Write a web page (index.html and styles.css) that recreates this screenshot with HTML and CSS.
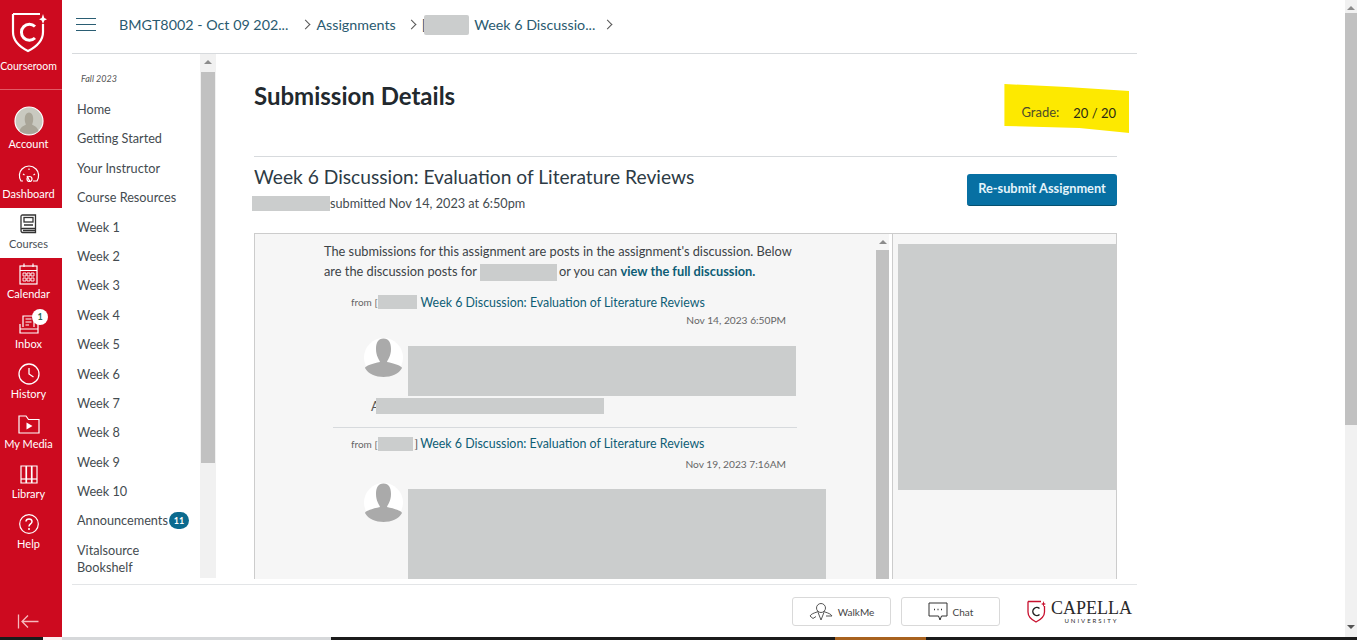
FILE: index.html
```html
<!DOCTYPE html>
<html lang="en">
<head>
    <meta charset="UTF-8">
    <meta name="viewport" content="width=device-width, initial-scale=1.0">
    <title>Submission Details</title>
    <link rel="stylesheet" href="styles.css">
</head>
<body>
    <div class="shell">
        <nav class="global-nav">
            <div class="brand">
                <svg width="36" height="42" viewBox="0 0 36 42" fill="none" stroke="#fff">
                    <path d="M2 3H29M2 3V21C2 30 9 36 17 40C25 36 32 30 32 21V13" stroke-width="2.2"/>
                    <path d="M24 15.5A8 8 0 1 0 24 27" stroke-width="3"/>
                    <path d="M32 3L33.3 7L36 8.3L33.3 9.6L32 13L30.7 9.6L28 8.3L30.7 7Z" fill="#fff" stroke="none"/>
                </svg>
                <span class="nav-label">Courseroom</span>
            </div>
            <a class="nav-item">
                <span class="nav-slot slot-top">
                    <svg class="avatar" width="30" height="30" viewBox="0 0 30 30">
                        <circle cx="15" cy="15" r="14" fill="#c9c9c0" stroke="#fff" stroke-width="1.2"/>
                        <path d="M5.5 25C7 20 11 19.5 12 18.5C10 15 10 7 15 6.5C20 7 20 15 18 18.5C19 19.5 23 20 24.500 25C20 29 10 29 5.500 25Z" fill="#a9a598"/>
                    </svg>
                </span>
                <span class="nav-label">Account</span>
            </a>
            <a class="nav-item">
                <span class="nav-slot">
                    <svg width="22" height="18" viewBox="0 0 22 18" fill="none" stroke="#fff" stroke-width="1.2">
                        <path d="M5 16H3C0.500 12 1 7 4 4C8 0 14 0 18 4C21 7 21.500 12 19 16H15"/>
                        <path d="M9 11L12 16.500M5 9L6.500 10M11 3.500V5M17 9L15.500 10"/>
                        <circle cx="11.500" cy="14" r="2.500"/>
                    </svg>
                </span>
                <span class="nav-label">Dashboard</span>
            </a>
            <a class="nav-item active">
                <span class="nav-slot">
                    <svg width="17" height="20" viewBox="0 0 17 20" fill="none" stroke="#333" stroke-width="1.300">
                        <path d="M1 16V2.500C1 1.500 1.500 1 2.500 1H15.500V14.500H2.500C1.500 14.500 1 15 1 16C1 17.500 1.500 18.500 2.500 18.500H15.500V14.500"/>
                        <rect x="4" y="3.500" width="9" height="4.500"/>
                        <path d="M4 11H13M3 16.500H15"/>
                    </svg>
                </span>
                <span class="nav-label">Courses</span>
            </a>
            <a class="nav-item">
                <span class="nav-slot">
                    <svg width="19" height="22" viewBox="0 0 19 22" fill="none" stroke="#fff" stroke-width="1.200">
                        <rect x="1" y="3" width="17" height="18"/>
                        <path d="M1 7.500H18M5 0.500V4M14 0.500V4"/>
                        <path d="M4 10H7V13H4ZM8 10H11V13H8ZM12 10H15V13H12ZM4 15H7V18H4ZM8 15H11V18H8ZM12 15H15V18H12Z" stroke-width="0.900"/>
                    </svg>
                </span>
                <span class="nav-label">Calendar</span>
            </a>
            <a class="nav-item">
                <span class="nav-slot">
                    <svg width="20" height="19" viewBox="0 0 20 19" fill="none" stroke="#fff" stroke-width="1.200">
                        <path d="M4 12V1H15V12"/>
                        <path d="M6.500 4H12.500M6.500 7H12.500M6.500 10H10"/>
                        <path d="M1 9V18H19V9M1 14H19"/>
                    </svg>
                </span>
                <span class="nav-label">Inbox</span>
                <span class="nav-badge">1</span>
            </a>
            <a class="nav-item">
                <span class="nav-slot">
                    <svg width="22" height="22" viewBox="0 0 22 22" fill="none" stroke="#fff" stroke-width="1.300">
                        <circle cx="11" cy="11" r="10"/>
                        <path d="M11 5V11L15.500 14"/>
                    </svg>
                </span>
                <span class="nav-label">History</span>
            </a>
            <a class="nav-item">
                <span class="nav-slot">
                    <svg width="22" height="19" viewBox="0 0 22 19" fill="none" stroke="#fff" stroke-width="1.200">
                        <path d="M1 18V1H8L10.500 4.500H21V18Z"/>
                        <path d="M8.500 7.500L14.500 11L8.500 14.500Z" fill="#fff" stroke="none"/>
                    </svg>
                </span>
                <span class="nav-label">My Media</span>
            </a>
            <a class="nav-item">
                <span class="nav-slot">
                    <svg width="18" height="19" viewBox="0 0 18 19" fill="none" stroke="#fff" stroke-width="1.200">
                        <path d="M1 1H6V18H1ZM6.500 1H11.500V18H6.500ZM12 1H17V18H12Z"/>
                        <path d="M1 14H17"/>
                    </svg>
                </span>
                <span class="nav-label">Library</span>
            </a>
            <a class="nav-item">
                <span class="nav-slot">
                    <svg width="20" height="20" viewBox="0 0 20 20" fill="none" stroke="#fff" stroke-width="1.200">
                        <circle cx="10" cy="10" r="9.300"/>
                        <path d="M7 7.500C7 4 13 4 13 7.500C13 10 10 9.800 10 12.500" stroke-width="1.500"/>
                        <circle cx="10" cy="15" r="1" fill="#fff" stroke="none"/>
                    </svg>
                </span>
                <span class="nav-label">Help</span>
            </a>
            <a class="collapse">
                <svg width="22" height="15" viewBox="0 0 22 15" fill="none" stroke="#f6b9bd" stroke-width="1.300">
                    <path d="M1.500 0.500V14.500M21.500 7.500H5M11 1.500L5 7.500L11 13.500"/>
                </svg>
            </a>
        </nav>

        <div class="page">
            <header class="topbar">
                <span class="hamburger"><i></i><i></i><i></i></span>
                <a class="crumb crumb-course">BMGT8002 - Oct 09 202...</a>
                <span class="chevron"></span>
                <a class="crumb crumb-assign">Assignments</a>
                <span class="chevron"></span>
                <span class="crumb">[</span>
                <span class="redact redact-crumb"></span>
                <a class="crumb">Week 6 Discussio...</a>
                <span class="chevron"></span>
            </header>

            <div class="middle">
                <aside class="sidebar">
                    <div class="course-nav">
                        <div class="term">Fall 2023</div>
                        <ul class="course-links">
                            <li>Home</li>
                            <li>Getting Started</li>
                            <li>Your Instructor</li>
                            <li>Course Resources</li>
                            <li>Week 1</li>
                            <li>Week 2</li>
                            <li>Week 3</li>
                            <li>Week 4</li>
                            <li>Week 5</li>
                            <li>Week 6</li>
                            <li>Week 7</li>
                            <li>Week 8</li>
                            <li>Week 9</li>
                            <li>Week 10</li>
                            <li class="with-badge">Announcements<span class="count">11</span></li>
                            <li>Vitalsource<br>Bookshelf</li>
                        </ul>
                    </div>
                    <div class="scrollbar side-scroll"><span class="arrow-up"></span><span class="thumb"></span></div>
                </aside>

                <main class="content">
                    <div class="details-head">
                        <h1>Submission Details</h1>
                        <div class="grade">
                            <span class="grade-label">Grade:</span>
                            <span class="grade-value">20 / 20</span>
                        </div>
                    </div>

                    <div class="assignment-row">
                        <div>
                            <h2>Week 6 Discussion: Evaluation of Literature Reviews</h2>
                            <p class="submitted"><span class="redact redact-name"></span>submitted Nov 14, 2023 at 6:50pm</p>
                        </div>
                        <button class="resubmit">Re-submit Assignment</button>
                    </div>

                    <div class="panel">
                        <div class="panel-main">
                            <p class="intro">The submissions for this assignment are posts in the assignment's discussion. Below<br>are the discussion posts for <span class="redact redact-student"></span>or you can <a>view the full discussion.</a></p>

                            <div class="post post-first">
                                <div class="from"><small>from [</small><span class="redact redact-from"></span><a>Week 6 Discussion: Evaluation of Literature Reviews</a></div>
                                <div class="post-date">Nov 14, 2023 6:50PM</div>
                                <div class="post-body">
                                    <svg class="post-avatar" width="39" height="39" viewBox="0 0 39 39">
                                        <circle cx="19.500" cy="19.500" r="19.500" fill="#fff"/>
                                        <path d="M19.500 0.500C25 0.500 27 5 27 11C27 18 24 21 23 24C30 25.500 38 28 38 30C35 36 27 39 19.500 39C12 39 4 36 1 30C1 28 9 25.500 16 24C15 21 12 18 12 11C12 5 14 0.500 19.500 0.500Z" fill="#aaa"/>
                                    </svg>
                                    <span class="redact redact-msg-one"></span>
                                </div>
                                <div class="post-tail"><span class="tail-a">A</span><span class="redact redact-tail"></span></div>
                            </div>

                            <div class="post post-second">
                                <div class="from"><small>from [</small><span class="redact redact-from-two"></span><span class="close-bracket">]</span><a>Week 6 Discussion: Evaluation of Literature Reviews</a></div>
                                <div class="post-date">Nov 19, 2023 7:16AM</div>
                                <div class="post-body">
                                    <svg class="post-avatar" width="39" height="39" viewBox="0 0 39 39">
                                        <circle cx="19.500" cy="19.500" r="19.500" fill="#fff"/>
                                        <path d="M19.500 0.500C25 0.500 27 5 27 11C27 18 24 21 23 24C30 25.500 38 28 38 30C35 36 27 39 19.500 39C12 39 4 36 1 30C1 28 9 25.500 16 24C15 21 12 18 12 11C12 5 14 0.500 19.500 0.500Z" fill="#aaa"/>
                                    </svg>
                                    <span class="redact redact-msg-two"></span>
                                </div>
                                <div class="cut-line"></div>
                            </div>
                        </div>
                        <div class="scrollbar panel-scroll"><span class="arrow-up"></span><span class="thumb"></span></div>
                        <div class="panel-side"><span class="redact redact-side"></span></div>
                    </div>
                </main>
            </div>

            <footer class="footer">
                <button class="foot-btn">
                    <svg width="24" height="18" viewBox="0 0 24 18" fill="none" stroke="#444" stroke-width="0.900">
                        <circle cx="12" cy="5" r="4.500"/>
                        <path d="M8.500 8L12 17L15.500 8M8 9C5 10 2 11 1 13L4 15.500L7 13.500M16 9C19 10 22 11 23 13L17 13"/>
                    </svg>
                    WalkMe
                </button>
                <button class="foot-btn">
                    <svg width="20" height="19" viewBox="0 0 20 19" fill="none" stroke="#333" stroke-width="1">
                        <path d="M1 1H19V14H13.500L12 18L10.500 14H1Z"/>
                        <path d="M6 7.500H7M9.500 7.500H10.500M13 7.500H14" stroke-width="1.500"/>
                    </svg>
                    Chat
                </button>
                <div class="capella">
                    <svg width="19" height="23" viewBox="0 0 19 23" fill="none" stroke="#c8102e">
                        <path d="M1 1.500H14M1 1.500V12C1 17 5 20 9 22C13 20 17.500 17 17.500 12V6" stroke-width="1.300"/>
                        <path d="M12.500 8.500A4 4 0 1 0 12.500 14.500" stroke="#222" stroke-width="1.500"/>
                        <path d="M16.500 1L17.200 3.200L19 4L17.200 4.800L16.500 7L15.800 4.800L14 4L15.800 3.200Z" fill="#c8102e" stroke="none"/>
                    </svg>
                    <div class="capella-name">
                        <span class="capella-big">CAPELLA</span>
                        <span class="capella-small">UNIVERSITY</span>
                    </div>
                </div>
            </footer>
        </div>

        <div class="scrollbar page-scroll"><span class="arrow-up"></span><span class="thumb"></span><span class="arrow-down"></span></div>
    </div>

    <div class="taskbar">
        <span class="task-dark task-a"></span>
        <span class="task-white"></span>
        <span class="task-light"></span>
        <span class="task-dark task-b"></span>
        <span class="task-orange"></span>
        <span class="task-dark task-c"></span>
    </div>
</body>
</html>
```

FILE: styles.css
```css
html, body {
    height: 100%;
    margin: 0;
    padding: 0;
    overflow: hidden;
}

body {
    font-family: Lato, "Open Sans", sans-serif;
    color: #2d3b45;
    background-color: #fff;
    display: flex;
    flex-direction: column;
}

h1, h2, p, ul {
    margin: 0;
    padding: 0;
}

.shell {
    display: flex;
    height: 637px;
}

/* left red nav */
.global-nav {
    width: 62px;
    flex-shrink: 0;
    background-color: #cd0a1f;
    display: flex;
    flex-direction: column;
    color: #fff;
}

.brand {
    height: 90px;
    border-bottom: 1px solid #e25a66;
    margin-bottom: 18px;
    display: flex;
    flex-direction: column;
    align-items: center;
    padding: 11px 5px 0 0;
    box-sizing: border-box;
}

.brand .nav-label {
    margin-top: 6px;
    font-size: 10.500px;
}

.nav-item {
    height: 50px;
    padding: 3px 5px 0 0;
    box-sizing: border-box;
    display: flex;
    flex-direction: column;
    align-items: center;
    position: relative;
}

.nav-item.active {
    background-color: #fff;
    color: #4a4f55;
}

.nav-slot {
    height: 26px;
    display: flex;
    align-items: center;
    justify-content: center;
}

.slot-top {
    align-items: flex-start;
}

.avatar {
    margin-top: -5px;
}

.nav-label {
    font-size: 11px;
    line-height: 14px;
    white-space: nowrap;
}

.nav-badge {
    position: absolute;
    top: 1px;
    left: 32px;
    width: 16px;
    height: 16px;
    border-radius: 50%;
    background-color: #fff;
    color: #2b6a55;
    font-size: 9px;
    font-weight: bold;
    line-height: 16px;
    text-align: center;
}

.collapse {
    margin-top: auto;
    margin-bottom: 9px;
    padding-right: 6px;
    text-align: center;
    height: 15px;
}

/* main column */
.page {
    width: 1283px;
    flex-shrink: 0;
    display: flex;
    flex-direction: column;
}

.topbar {
    height: 49px;
    width: 1065px;
    margin-left: 10px;
    padding-bottom: 4px;
    border-bottom: 1px solid #d7dadd;
    display: flex;
    align-items: center;
    flex-shrink: 0;
}

.hamburger {
    width: 20px;
    margin-left: 4px;
    margin-right: 23px;
    display: flex;
    flex-direction: column;
    gap: 5px;
}

.hamburger i {
    display: block;
    height: 1px;
    background-color: #2a5d73;
}

.crumb {
    font-size: 14.300px;
    color: #2a5a70;
    white-space: nowrap;
}

.chevron {
    width: 6px;
    height: 6px;
    border-top: 1px solid #555;
    border-right: 1px solid #555;
    transform: rotate(45deg);
    margin: 0 7px 0 14px;
    flex-shrink: 0;
}

.crumb-assign + .chevron {
    margin-left: 12px;
}

.chevron:last-child {
    margin-left: 9px;
}

.redact {
    display: inline-block;
    background-color: #cbcdcd;
}

.redact-crumb {
    width: 45px;
    height: 20px;
    border-radius: 2px;
    margin: 0 5px 0 -2px;
}

.middle {
    height: 530px;
    margin-left: 10px;
    display: flex;
    overflow: hidden;
    flex-shrink: 0;
}

/* course menu */
.sidebar {
    width: 144px;
    flex-shrink: 0;
    display: flex;
}

.course-nav {
    width: 128px;
    padding-left: 5px;
    box-sizing: border-box;
}

.term {
    margin-top: 19px;
    margin-left: 4px;
    font-size: 9px;
    line-height: 12px;
    font-style: italic;
    color: #555;
}

.course-links {
    list-style: none;
    margin-top: 16px;
    display: flex;
    flex-direction: column;
    gap: 12.400px;
    font-size: 12.700px;
    line-height: 17px;
    color: #444b50;
}

.with-badge {
    display: flex;
    align-items: center;
    white-space: nowrap;
}

.count {
    width: 20px;
    height: 17px;
    border-radius: 9px;
    background-color: #0b6a8e;
    color: #fff;
    font-size: 9px;
    font-weight: bold;
    line-height: 17px;
    text-align: center;
    margin-left: 1px;
    flex-shrink: 0;
}

/* scrollbars are just drawn, nothing scrolls here */
.scrollbar {
    background-color: #f1f1f1;
    display: flex;
    flex-direction: column;
    align-items: center;
    position: relative;
}

.thumb {
    display: block;
    background-color: #c1c1c1;
    width: 100%;
}

.arrow-up, .arrow-down {
    width: 0;
    height: 0;
    border-left: 4px solid transparent;
    border-right: 4px solid transparent;
    position: absolute;
}

.arrow-up {
    border-bottom: 4px solid #8c8c8c;
    top: 6px;
}

.arrow-down {
    border-top: 4px solid #555;
    bottom: 8px;
}

.side-scroll {
    width: 16px;
    height: 524px;
    padding: 18px 1px 0;
    box-sizing: border-box;
}

.side-scroll .thumb {
    height: 391px;
}

.page-scroll {
    width: 12px;
    flex-shrink: 0;
    padding-top: 13px;
    box-sizing: border-box;
}

.page-scroll .thumb {
    height: 412px;
}

/* submission content */
.content {
    width: 921px;
    padding-left: 38px;
    padding-right: 20px;
    box-sizing: border-box;
}

.details-head {
    height: 103px;
    padding-top: 27px;
    box-sizing: border-box;
    border-bottom: 1px solid #d7dadd;
    display: flex;
    justify-content: space-between;
}

h1 {
    font-size: 24px;
    line-height: 30px;
    font-weight: bold;
    color: #22292e;
}

.grade {
    position: relative;
    margin-top: 22px;
    height: 20px;
    padding-right: 1px;
    display: flex;
    align-items: center;
    gap: 14px;
    z-index: 0;
}

/* the yellow highlighter mark on top of the screenshot */
.grade::before {
    content: "";
    position: absolute;
    left: -17px;
    top: -19px;
    width: 125px;
    height: 49px;
    background-color: #fde900;
    clip-path: polygon(0 0, 50% 3px, 100% 7px, 100% 100%, 60% 44px, 0 42px);
    z-index: -1;
}

.grade-label {
    font-size: 13px;
    color: #4c4c2a;
    margin-top: -2px;
}

.grade-value {
    font-size: 13px;
    color: #2a2a14;
}

.assignment-row {
    display: flex;
    justify-content: space-between;
    padding-top: 8px;
}

h2 {
    font-size: 19.200px;
    line-height: 24px;
    font-weight: normal;
    color: #2d3b45;
}

.submitted {
    margin-top: 5px;
    font-size: 12.700px;
    line-height: 18px;
    color: #444b50;
    display: flex;
    align-items: center;
}

.redact-name {
    width: 78px;
    height: 15px;
    margin-left: -2px;
}

.resubmit {
    width: 150px;
    height: 32px;
    margin-top: 9px;
    padding: 0 0 3px;
    border: none;
    border-bottom: 1px solid #05506f;
    border-radius: 3px;
    background-color: #0770a3;
    color: #e4f4fb;
    font-family: Lato, sans-serif;
    font-size: 12.800px;
    font-weight: bold;
    cursor: pointer;
}

.panel {
    margin-top: 21px;
    height: 346px;
    border: 1px solid #ccc;
    border-bottom: none;
    box-sizing: border-box;
    display: flex;
}

.panel-main {
    width: 621px;
    flex-shrink: 0;
    background-color: #f6f6f6;
    padding-top: 8px;
    overflow: hidden;
    box-sizing: border-box;
}

.intro {
    margin-left: 69px;
    font-size: 12.800px;
    line-height: 19.500px;
    color: #3c4347;
    white-space: nowrap;
}

.intro a, .from a {
    color: #0d5d75;
}

.intro a {
    font-weight: bold;
}

.redact-student {
    width: 77px;
    height: 17px;
    margin-right: 2px;
    vertical-align: middle;
}

.post {
    margin-left: 78px;
    width: 464px;
}

.post-first {
    margin-top: 12.500px;
    height: 133px;
    border-bottom: 1px solid #d7dadd;
}

.post-second {
    padding-top: 7.500px;
}

.from {
    padding-left: 18px;
    height: 17px;
    display: flex;
    align-items: center;
    white-space: nowrap;
}

.from small {
    font-size: 10px;
    color: #666;
    margin-right: 1px;
}

.from a {
    font-size: 12.400px;
}

.redact-from {
    width: 39px;
    height: 14px;
    margin-right: 3px;
}

.redact-from-two {
    width: 35px;
    height: 14px;
}

.close-bracket {
    font-size: 12px;
    margin: 0 2px 0 1px;
    color: #555;
}

.post-date {
    margin-top: 3.500px;
    padding-right: 11px;
    text-align: right;
    font-size: 10.200px;
    line-height: 12px;
    color: #666;
}

.post-second .post-date {
    margin-top: 5.500px;
}

.post-body {
    margin-top: 12px;
    padding-left: 31px;
    display: flex;
    align-items: flex-start;
    gap: 5px;
}

.post-second .post-body {
    margin-top: 13px;
}

.post-avatar {
    flex-shrink: 0;
}

.redact-msg-one {
    width: 388px;
    height: 50px;
    margin-top: 8px;
    flex-shrink: 0;
}

.redact-msg-two {
    width: 418px;
    height: 90px;
    margin-top: 6px;
    flex-shrink: 0;
}

.post-tail {
    margin-top: 2px;
    padding-left: 38px;
    height: 16px;
    display: flex;
    align-items: center;
}

.tail-a {
    font-size: 13px;
    color: #555;
    width: 5px;
}

.redact-tail {
    width: 228px;
    height: 16px;
}

.cut-line {
    margin-left: 75px;
    width: 380px;
    border-top: 1px dotted #777;
}

.panel-scroll {
    width: 13px;
    flex-shrink: 0;
    background-color: #f6f6f6;
    padding-top: 16px;
    box-sizing: border-box;
}

.panel-scroll .thumb {
    height: 329px;
}

.panel-side {
    margin-left: 3px;
    flex: 1;
    border-left: 1px solid #ccc;
    background-color: #f6f6f6;
    padding: 10px 0 0 5px;
}

.redact-side {
    display: block;
    height: 246px;
}

/* bottom bar */
.footer {
    flex: 1;
    width: 1065px;
    margin-left: 10px;
    border-top: 1px solid #e3e5e7;
    box-sizing: border-box;
    display: flex;
    align-items: flex-start;
    padding-top: 12px;
}

.foot-btn {
    width: 99px;
    height: 29px;
    margin-right: 10px;
    background-color: #fff;
    border: 1px solid #d9d9d9;
    border-radius: 3px;
    font-family: Lato, sans-serif;
    font-size: 10px;
    color: #444;
    display: flex;
    align-items: center;
    justify-content: center;
    gap: 5px;
}

.foot-btn:first-child {
    margin-left: 720px;
}

.capella {
    margin-left: 17px;
    margin-top: 3px;
    display: flex;
    gap: 5px;
}

.capella-name {
    display: flex;
    flex-direction: column;
    align-items: center;
    font-family: "Liberation Serif", serif;
    color: #2a2a2a;
}

.capella-big {
    font-size: 18px;
    line-height: 16px;
    white-space: nowrap;
}

.capella-small {
    font-family: Lato, sans-serif;
    font-size: 6px;
    line-height: 9px;
    letter-spacing: 2px;
    white-space: nowrap;
}

.taskbar {
    height: 3px;
    display: flex;
}

.task-dark {
    background-color: #1b1b1b;
}

.task-a { width: 43px; }
.task-white { width: 19px; background-color: #fdeef0; }
.task-light { width: 269px; background-color: #d6d8da; }
.task-b { width: 504px; }
.task-orange { width: 91px; background-color: #a8621f; }
.task-c { flex: 1; }
```
